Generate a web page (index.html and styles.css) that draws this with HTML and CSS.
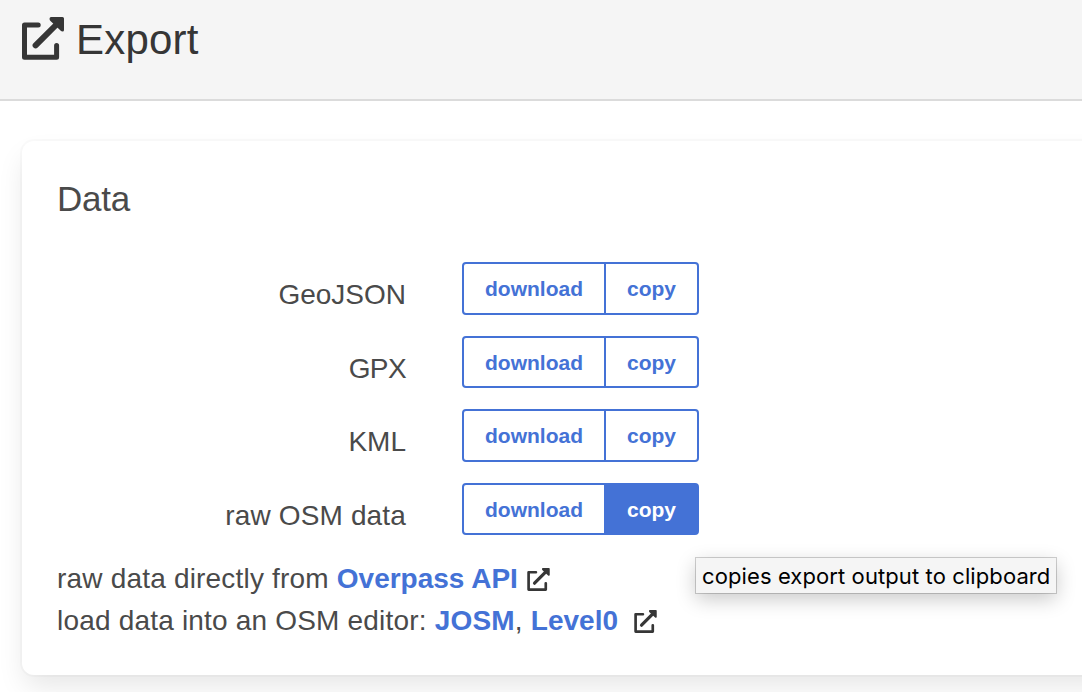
FILE: index.html
```html
<!DOCTYPE html>
<html lang="en">
<head>
<meta charset="utf-8">
<title>Export</title>
<link rel="stylesheet" href="styles.css">
</head>
<body>
<svg class="symbols" aria-hidden="true">
  <symbol id="external" viewBox="0 0 42 43">
    <path d="M16.2 8H2.5V40.3H34.6V28.5" fill="none" stroke="currentColor" stroke-width="5" stroke-linecap="round" stroke-linejoin="round"/>
    <path d="M13.6 28.4L36 6" fill="none" stroke="currentColor" stroke-width="6" stroke-linecap="round"/>
    <path d="M29 0H40.5Q42 0 42 1.5V13Q42 14.5 40.5 14.5Q39.5 14.5 38.5 13.5L28.5 4Q27.5 3 27.5 1.7Q27.7 0 29 0Z" fill="currentColor"/>
  </symbol>
</svg>
<header class="head">
  <svg class="head-icon"><use href="#external"/></svg>
  <h1 class="title">Export</h1>
</header>
<main class="content">
  <section class="card">
    <h2 class="subtitle">Data</h2>
    <div class="formats">
      <div class="format"><span class="label">GeoJSON</span><div class="buttons"><a class="button">download</a><a class="button">copy</a></div></div>
      <div class="format"><span class="label label-tight">GPX</span><div class="buttons"><a class="button">download</a><a class="button">copy</a></div></div>
      <div class="format"><span class="label">KML</span><div class="buttons"><a class="button">download</a><a class="button">copy</a></div></div>
      <div class="format"><span class="label label-wide">raw OSM data</span><div class="buttons"><a class="button">download</a><a class="button active">copy</a></div></div>
    </div>
    <p class="line">raw data directly from <a class="link">Overpass API</a><svg class="ext"><use href="#external"/></svg></p>
    <p class="line">load data into an OSM editor: <a class="link link-wide">JOSM</a>, <a class="link">Level0</a><svg class="ext ext-wide"><use href="#external"/></svg></p>
  </section>
</main>
<div class="tooltip">copies export output to clipboard</div>
</body>
</html>
```

FILE: styles.css
```css
* { box-sizing: border-box; }
body {
  margin: 0;
  height: 692px;
  overflow: hidden;
  background: #fff;
  color: #4a4a4a;
  font: 28px/42px "Liberation Sans", Arial, sans-serif;
}
.symbols { display: none; }
.head {
  display: flex;
  align-items: flex-start;
  height: 101px;
  padding: 17px 22px 0;
  background: #f5f5f5;
  border-bottom: 2px solid #dbdbdb;
  color: #363636;
}
.head-icon { width: 42px; height: 43px; margin-right: 12px; }
.title { margin: 0; font-size: 42px; line-height: 46px; font-weight: 400; letter-spacing: .2px; }
.content { padding: 40px 0 0 22px; }
.card {
  width: 1100px;
  height: 534px;
  padding: 35px;
  background: #fff;
  border-radius: 12px;
  box-shadow: 0 14px 28px -3.5px rgba(10, 10, 10, .1), 0 0 0 2px rgba(10, 10, 10, .02);
}
.subtitle { margin: 0; font-size: 35px; line-height: 46px; font-weight: 400; letter-spacing: -.2px; }
.formats { display: flex; flex-direction: column; gap: 21px; margin-top: 40px; }
.format { display: flex; height: 52.5px; }
.label { width: 349px; margin-right: 56px; padding-top: 12px; text-align: right; }
.label-tight { letter-spacing: -.6px; }
.label-wide { letter-spacing: .15px; }
.buttons { display: flex; }
.button {
  display: flex;
  align-items: center;
  justify-content: center;
  width: 144px;
  padding-top: 1.8px;
  border: 2px solid #4472d6;
  border-radius: 4px 0 0 4px;
  color: #4472d6;
  font-size: 21px;
  font-weight: 700;
}
.button + .button { width: 95px; margin-left: -2px; border-radius: 0 4px 4px 0; }
.button.active { background: #4472d6; color: #fff; }
.line { margin: 0; white-space: nowrap; letter-spacing: .19px; }
.formats + .line { margin-top: 23px; }
.link { color: #4472d6; font-weight: 700; letter-spacing: 0; }
.link-wide { letter-spacing: .2px; }
.ext { width: 23px; height: 23px; margin-left: 9px; color: #363636; vertical-align: -3px; }
.ext-wide { margin-left: 16px; }
.tooltip {
  position: absolute;
  left: 696px;
  top: 558px;
  width: 360px;
  height: 35px;
  padding-left: 6px;
  background: #f5f5f5;
  color: #000;
  font: 22px/37px Inter, sans-serif;
  letter-spacing: .1px;
  white-space: nowrap;
  box-shadow: 0 0 0 1px rgba(0, 0, 0, .18), 0 6px 20px rgba(0, 0, 0, .22);
}
```
